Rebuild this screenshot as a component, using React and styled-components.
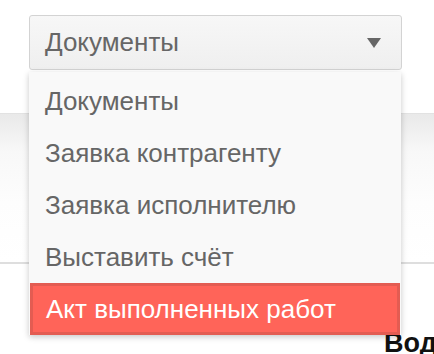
import React from "react";
import styled, { createGlobalStyle } from "styled-components";

const Global = createGlobalStyle`
  html, body { margin: 0; padding: 0; background: #fff; }
  body { width: 434px; height: 354px; overflow: hidden; font-family: "Liberation Sans", Arial, sans-serif; }
`;

const Page = styled.div`
  position: relative;
  width: 434px;
  height: 354px;
  overflow: hidden;
  background: #fff;
`;

const TopArea = styled.div`
  height: 113px;
`;

const Band = styled.div`
  height: 148px;
  border-top: 1px solid #e2e2e2;
  border-bottom: 2px solid #dedede;
  background: linear-gradient(to bottom, #e9e9e9 0%, #f8f8f8 25%, #fdfdfd 60%, #fff 100%);
`;

const Heading = styled.div`
  padding: 64px 0 0 384px;
  white-space: nowrap;
  font-size: 27px;
  font-weight: 700;
  color: #111;
`;

const SelectWrap = styled.div`
  position: absolute;
  left: 29px;
  top: 15px;
  width: 373px;
`;

const SelectBox = styled.div`
  display: flex;
  align-items: center;
  justify-content: space-between;
  height: 55px;
  box-sizing: border-box;
  padding: 0 20px 0 15px;
  border: 1px solid #d3d3d3;
  border-radius: 3px;
  background: linear-gradient(to bottom, #f7f7f7, #efefef);
  color: #666;
  font-size: 26px;
`;

const Arrow = styled.span`
  width: 0;
  height: 0;
  border-left: 7px solid transparent;
  border-right: 7px solid transparent;
  border-top: 10px solid #666;
`;

const List = styled.ul`
  list-style: none;
  margin: 2px 0 0;
  padding: 3px 0 0;
  width: 372px;
  background: #f9f9f9;
  box-shadow: 0 2px 6px rgba(0, 0, 0, 0.22);
`;

const Item = styled.li`
  height: 52px;
  display: flex;
  align-items: center;
  box-sizing: border-box;
  padding-left: ${(p) => (p.$active ? "13px" : "16px")};
  font-size: 26px;
  color: ${(p) => (p.$active ? "#fff" : "#666")};
  background: ${(p) => (p.$active ? "#ff6459" : "transparent")};
  border: ${(p) => (p.$active ? "3px solid #e35c52" : "none")};
  margin: ${(p) => (p.$active ? "0 1px 1px" : "0")};
`;

const items = [
  "Документы",
  "Заявка контрагенту",
  "Заявка исполнителю",
  "Выставить счёт",
  "Акт выполненных работ",
];

export default function App() {
  return (
    <Page>
      <Global />
      <TopArea />
      <Band />
      <Heading>Водитель</Heading>
      <SelectWrap>
        <SelectBox>
          <span>Документы</span>
          <Arrow />
        </SelectBox>
        <List>
          {items.map((t, i) => (
            <Item key={t} $active={i === items.length - 1}>
              {t}
            </Item>
          ))}
        </List>
      </SelectWrap>
    </Page>
  );
}
